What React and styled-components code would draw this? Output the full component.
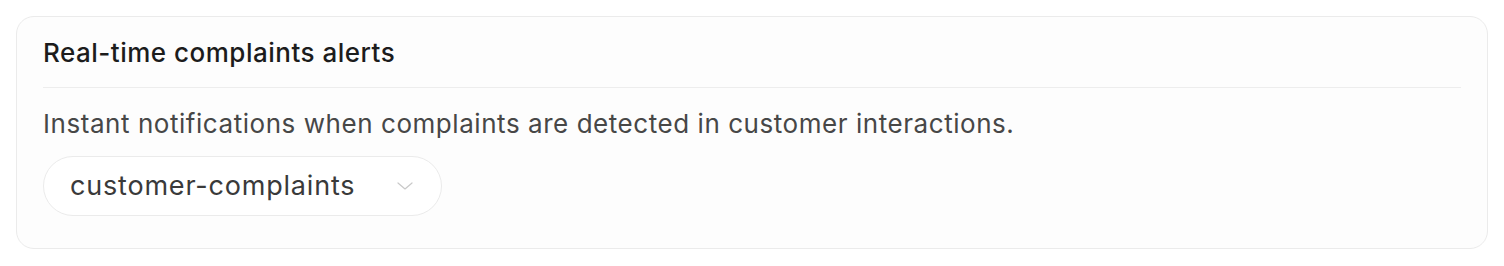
import styled, { createGlobalStyle } from 'styled-components';

const GlobalStyle = createGlobalStyle`
  body {
    margin: 0;
    background: #ffffff;
    font-family: Inter, "Noto Sans", sans-serif;
  }
`;

function App() {
  return (
    <>
      <GlobalStyle />
      <Page>
        <Card>
          <CardHeader>
            <Title>Real-time complaints alerts</Title>
          </CardHeader>
          <CardBody>
            <Description>
              Instant notifications when complaints are detected in customer interactions.
            </Description>
            <SelectButton type="button">
              <SelectValue>customer-complaints</SelectValue>
              <Chevron viewBox="0 0 16 8" width="16" height="8">
                <path d="M1 1l7 6 7-6" fill="none" stroke="#c9c9c9" strokeWidth="1.2" strokeLinecap="round" strokeLinejoin="round" />
              </Chevron>
            </SelectButton>
          </CardBody>
        </Card>
      </Page>
    </>
  );
}

export default App;

const Page = styled.div`
  padding: 16px;
`;

const Card = styled.div`
  border: 1px solid #ebebeb;
  border-radius: 18px;
  background: #fdfdfd;
  padding: 0 26px 32px;
`;

const CardHeader = styled.div`
  padding: 20px 0 18px;
  border-bottom: 1px solid #ededed;
`;

const Title = styled.h2`
  margin: 0;
  font-size: 26px;
  line-height: 32px;
  font-weight: 500;
  letter-spacing: 0.5px;
  color: #1c1c1c;
`;

const CardBody = styled.div`
  display: flex;
  flex-direction: column;
  align-items: flex-start;
  padding-top: 20px;
  gap: 16px;
`;

const Description = styled.p`
  margin: 0;
  font-size: 26px;
  line-height: 32px;
  letter-spacing: 0.55px;
  color: #474747;
`;

const SelectButton = styled.button`
  display: flex;
  align-items: center;
  width: 399px;
  height: 60px;
  padding: 0 28px 0 26px;
  border: 1px solid #ebebeb;
  border-radius: 30px;
  background: #ffffff;
  font-family: inherit;
  cursor: pointer;
`;

const SelectValue = styled.span`
  font-size: 27px;
  line-height: 34px;
  letter-spacing: 0.8px;
  color: #3a3a3a;
`;

const Chevron = styled.svg`
  margin-left: auto;
`;
